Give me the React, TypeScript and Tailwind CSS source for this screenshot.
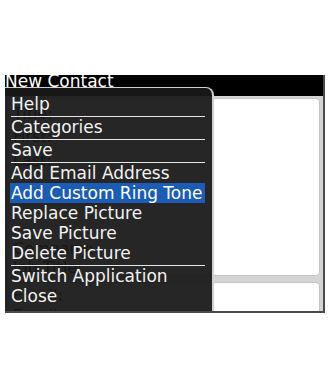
const font = { fontFamily: '"DejaVu Sans", Verdana, sans-serif' };

type Entry = { label?: string; sep?: boolean; active?: boolean };

const menu: Entry[] = [
  { label: "Help" },
  { sep: true },
  { label: "Categories" },
  { sep: true },
  { label: "Save" },
  { sep: true },
  { label: "Add Email Address" },
  { label: "Add Custom Ring Tone", active: true },
  { label: "Replace Picture" },
  { label: "Save Picture" },
  { label: "Delete Picture" },
  { sep: true },
  { label: "Switch Application" },
  { label: "Close" },
];

function Field({ label, className }: { label: string; className?: string }) {
  return <div className={"text-[16px] leading-[18px] text-black " + (className ?? "")}>{label}</div>;
}

export default function App() {
  return (
    <div className="w-[330px] h-[385px] bg-white pt-[75px] pl-[5px]" style={font}>
      <div className="relative w-[320px] h-[238px] bg-[#d4d4d4] border-r-2 border-b-2 border-[#4a4a4a] overflow-hidden">
        <div className="h-[21px] bg-black text-[17px] leading-[12px] text-white whitespace-nowrap">New Contact</div>

        <div className="flex flex-col gap-[6px] pl-[3px] pr-[3px] pt-[2px]">
          <div className="h-[178px] bg-white border border-[#c4c4c4] rounded-[4px] pl-[4px] pt-[6px]">
            <Field label="Title:" />
            <Field label="First:" className="mt-[5px]" />
            <Field label="Last:" className="mt-[6px]" />
            <Field label="Company:" className="mt-[70px]" />
            <Field label="Job Title:" className="mt-[1px]" />
          </div>
          <div className="h-[60px] bg-white border border-[#c4c4c4] rounded-[4px] pl-[4px] pt-[4px]">
            <Field label="Email:" />
            <Field label="Email:" className="mt-[2px]" />
          </div>
        </div>

        <div className="absolute left-0 top-[12px] bottom-0 w-[209px] bg-[rgba(24,24,24,0.94)] border-t border-r-2 border-[#cfcfcf] rounded-tr-[8px] pt-[6px] text-[17px] leading-[20px] text-[#f2f2f2]">
          {menu.map((m, i) =>
            m.sep ? (
              <div key={i} className="ml-[6px] w-[194px] h-px bg-[#e6e6e6] mt-[2px]" />
            ) : (
              <div
                key={i}
                className={
                  "ml-[5px] w-[195px] pl-[1px] h-[20px] whitespace-nowrap " +
                  (m.active ? "bg-[#1b5cb7] text-white" : "")
                }
              >
                {m.label}
              </div>
            )
          )}
        </div>
      </div>
    </div>
  );
}
